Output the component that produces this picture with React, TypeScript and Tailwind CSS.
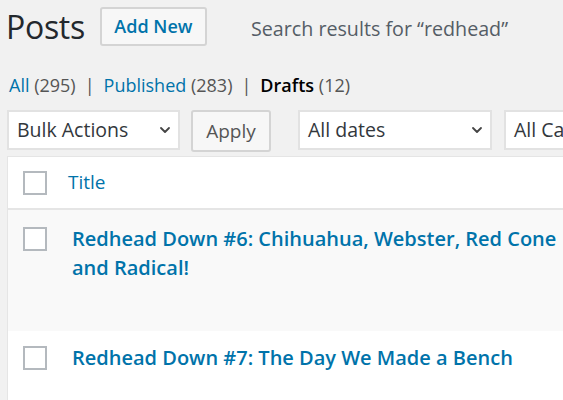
import { ChevronDown } from 'lucide-react';

const posts = [
  { id: 6, title: 'Redhead Down #6: Chihuahua, Webster, Red Cone and Radical!' },
  { id: 7, title: 'Redhead Down #7: The Day We Made a Bench' },
];

function Select({ label, width }: { label: string; width: string }) {
  return (
    <div
      className={`${width} h-[40px] shrink-0 bg-white border-2 border-[#e2e2e2] flex items-center justify-between pl-[8px] pr-[5px] text-[19.5px] text-[#32373c] overflow-hidden whitespace-nowrap`}
    >
      <span>{label}</span>
      <ChevronDown size={16} strokeWidth={2.75} className="text-[#444] shrink-0" />
    </div>
  );
}

function Checkbox() {
  return <div className="w-[24px] h-[24px] shrink-0 bg-white border-2 border-[#b4b9be]" />;
}

export default function App() {
  return (
    <div className="w-[563px] h-[400px] overflow-hidden bg-[#f1f1f1] font-['Open_Sans',sans-serif]">
      <div className="flex items-center pt-[7px] pl-[6px]">
        <h1 className="text-[32px] leading-[39px] text-[#23282d] tracking-[-0.3px]">Posts</h1>
        <button className="ml-[15px] w-[107px] h-[39px] border-2 border-[#d4d4d4] bg-[#f7f7f7] rounded-[3px] text-[18px] font-semibold text-[#0073aa]">
          Add New
        </button>
        <span className="ml-[44px] mt-[4px] text-[19.7px] text-[#555d66]">Search results for “redhead”</span>
      </div>

      <div className="mt-[26px] pl-[9px] text-[18px] leading-[26px] text-[#555] flex items-center gap-[9px]">
        <span><span className="text-[#0073aa]">All</span> (295)</span>
        <span>|</span>
        <span><span className="text-[#0073aa]">Published</span> (283)</span>
        <span>|</span>
        <span><span className="font-semibold text-[#000]">Drafts</span> (12)</span>
      </div>

      <div className="mt-[12px] pl-[7px] flex items-start">
        <Select label="Bulk Actions" width="w-[173px]" />
        <button className="ml-[11px] h-[42px] w-[80px] shrink-0 border-2 border-[#d4d4d4] bg-[#f7f7f7] rounded-[3px] text-[19px] text-[#555]">
          Apply
        </button>
        <div className="ml-[27px]">
          <Select label="All dates" width="w-[194px]" />
        </div>
        <div className="ml-[12px]">
          <Select label="All Categories" width="w-[180px]" />
        </div>
      </div>

      <div className="mt-[4px] ml-[7px] w-[700px] border border-[#e5e5e5] bg-white">
        <div className="h-[53px] flex items-center pl-[15px] border-b-2 border-[#e5e5e5]">
          <Checkbox />
          <span className="ml-[21px] text-[19px] text-[#0073aa]">Title</span>
        </div>
        {posts.map((p, i) => (
          <div
            key={p.id}
            className={`flex items-start pl-[15px] ${i === 0 ? 'bg-[#f9f9f9] h-[121px] pt-[17px]' : 'bg-white h-[80px] pt-[15px]'}`}
          >
            <Checkbox />
            <a className="ml-[25px] w-[490px] text-[20px] leading-[29px] font-semibold text-[#0073aa] -mt-[3px]">
              {p.title}
            </a>
          </div>
        ))}
      </div>
    </div>
  );
}
